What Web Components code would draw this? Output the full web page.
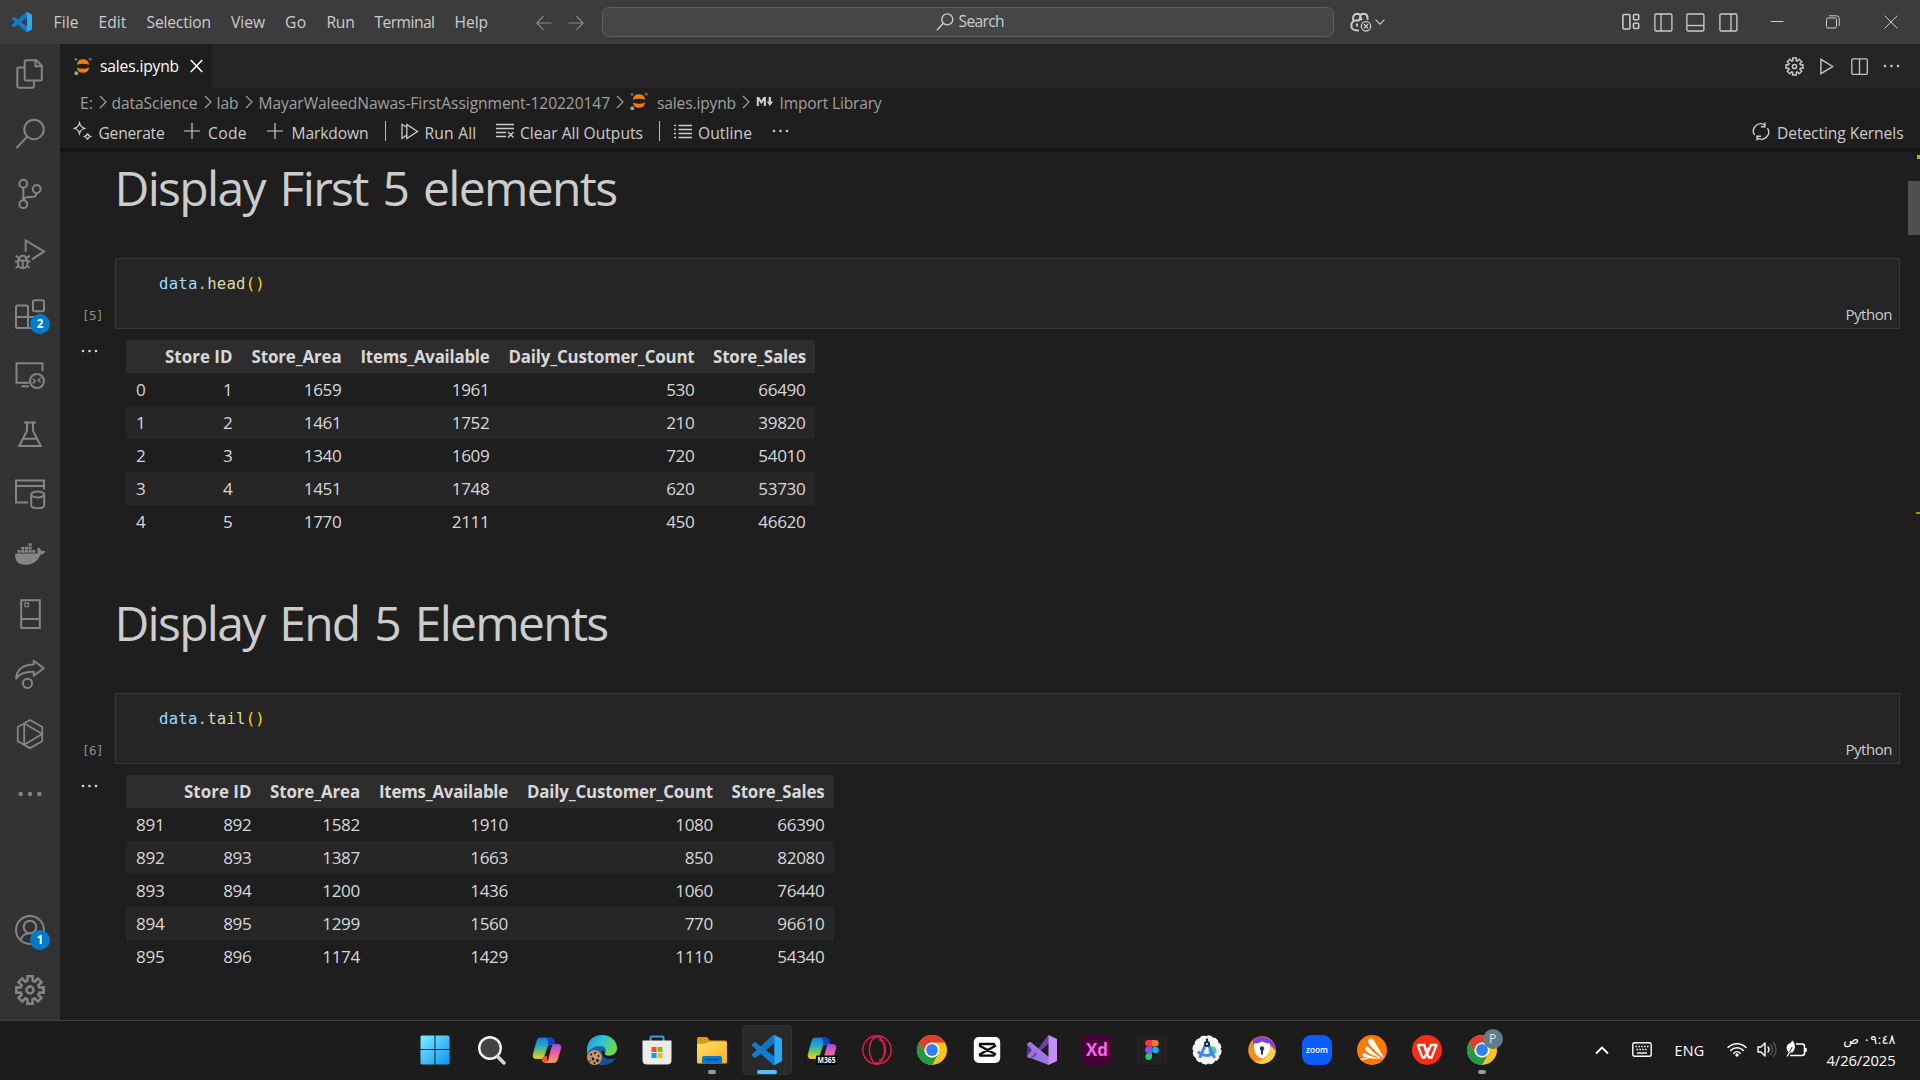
<!DOCTYPE html>
<html lang="en">
<head>
<meta charset="utf-8">
<title>sales.ipynb - Visual Studio Code</title>
<style>
html,body{margin:0;height:100%;background:#1e1e1e;overflow:hidden}
body{font-family:"Open Sans","Noto Sans",sans-serif;font-size:15.6px;color:#ccc}
</style>
</head>
<body>
<desk-top></desk-top>
<script>
const gear = (c, ro, ri, tw, bw) => {
  let d = '';
  for (let i = 0; i < 8; i++) {
    const a = i * Math.PI / 4;
    const p = (r, o) => { const b = a + o; return (c + r * Math.sin(b)).toFixed(2) + ' ' + (c - r * Math.cos(b)).toFixed(2); };
    d += (i ? 'L' : 'M') + p(ri, -bw) + 'L' + p(ro, -tw) + 'L' + p(ro, tw) + 'L' + p(ri, bw);
  }
  return d + 'Z';
};
const S = (w, body) => `<g fill="none" stroke="currentColor" stroke-width="${w}">${body}</g>`;
const VS = 'M23.15 2.587L18.21.21a1.494 1.494 0 0 0-1.705.29l-9.46 8.63-4.12-3.128a.999.999 0 0 0-1.276.057L.327 7.261A1 1 0 0 0 .326 8.74L3.899 12 .326 15.26a1 1 0 0 0 .001 1.479L1.65 17.94a.999.999 0 0 0 1.276.057l4.12-3.128 9.46 8.63a1.492 1.492 0 0 0 1.704.29l4.942-2.377A1.5 1.5 0 0 0 24 20.06V3.939a1.5 1.5 0 0 0-.85-1.352zm-5.146 14.861L10.826 12l7.178-5.448v10.896z';
const vscode = `<path d="${VS}" fill="#0a77c6"/><path d="M7 9.2 16.5.5l1.5 6-7.2 5.5-6.9 0z" fill="#0a6bb5"/><path d="${VS}" fill="#1f8ad8" fill-opacity=".35"/><path d="M18.2.2 23.15 2.6A1.5 1.5 0 0 1 24 3.94v16.12a1.5 1.5 0 0 1-.85 1.35L18.2 23.8a1.5 1.5 0 0 1-1.7-.3c.6.5 1.5.1 1.5-.7V1.2c0-.8-.9-1.2-1.5-.7a1.5 1.5 0 0 1 1.7-.3z" fill="#2aa9f4"/>`;
const chrome = `<circle cx="15" cy="15" r="15" fill="#fcc31a"/><path d="M2 7.5A15 15 0 0 1 28 7.5H15a7.5 7.5 0 0 0-6.6 11z" fill="#e33b2e"/><path d="M2 7.5 8.5 18.7A7.5 7.5 0 0 0 21.5 18.7L15 30A15 15 0 0 1 2 7.5z" fill="#229a48"/><circle cx="15" cy="15" r="7.5" fill="#fff"/><circle cx="15" cy="15" r="5.9" fill="#3380ef"/>`;
const copilotDefs = `<defs><linearGradient id="a" x1="0" y1="0" x2="0" y2="1"><stop offset="0" stop-color="#1c7be8"/><stop offset=".4" stop-color="#22b0c8"/><stop offset=".7" stop-color="#7ec850"/><stop offset="1" stop-color="#f5d020"/></linearGradient><linearGradient id="b" x1="0" y1="0" x2="0" y2="1"><stop offset="0" stop-color="#a24be8"/><stop offset=".5" stop-color="#ee62a0"/><stop offset="1" stop-color="#ff9a58"/></linearGradient></defs>`;
const copilot = copilotDefs + `<path d="M8 3h10c2 0 3 1 3.500 3l1 3.500h-4c-2 0-3 1-3.600 3L12 21c-.6 2-1.700 2.500-3.500 2.500H4C1.500 23.500.6 22 1.300 19L5 6c.6-2 1.400-3 3-3z" fill="url(#a)" stroke="url(#a)" stroke-width=".8"/><path d="M16 2.600h3c2 0 3 1 3.500 3l1 4h-4c-2 0-3 .6-3.600 2.500C16 8 17 5 14 2.600z" fill="#1440c0"/><path d="M9 23.800c2-.2 2.600-1 3-2.500l2.800 0 1 6.500H13c-2 0-2.700-1-3-2z" fill="#f0523c"/><path d="M22 9.500h4c2.500 0 3.300 1.500 2.700 4L25.500 24c-.8 2.500-1.600 3.500-3.500 3.500h-8.500c1.800-.2 2.600-1.200 3.200-3l3.100-12c.5-1.800 1-2.700 2.200-3z" fill="url(#b)" stroke="url(#b)" stroke-width=".8"/>`;

/* name: [viewBox width, viewBox height, markup] */
const ICONS = {
  vscode: [24, 24, vscode],
  left: [16, 16, S(1.1, '<path d="M15.500 8H1M7.500 1.200.8 8l6.700 6.800"/>')],
  right: [16, 16, S(1.1, '<path d="M.5 8H15M8.500 1.200 15.200 8l-6.700 6.800"/>')],
  lens: [18, 18, S(1.3, '<circle cx="11.300" cy="6.400" r="5.500"/><path d="M7.300 10.300.9 17.300"/>')],
  ghcp: [22, 20, S(2, '<path d="M9 18.500c-4 0-7-1.500-7.500-3v-3.500c.2-1.400 1-2 1.800-2.500C2.600 5 3.300 2 7 1.800c2.300 0 3.200 1 3.300 2.200.2-1.500 1.500-2.200 3.500-2.200 3 .2 4 2 3.700 6M4 8.500h4.500c1.300-.6 1.800-2 1.800-4.500.2 2.200.5 3.500 1.800 4"/>') + '<path d="M6 11.500h2v3H6z" fill="currentColor"/><circle cx="16" cy="14.300" r="5.600" fill="#3c3c3c"/>' + S(1.3, '<circle cx="16" cy="14.300" r="4.700"/><path d="m14 12.300 4 4m0-4-4 4"/>')],
  down: [10, 6, S(1.2, '<path d="m.6.700 4.400 4.400L9.400.7"/>')],
  layout: [18, 18, S(1.5, '<rect x=".9" y="1.500" width="7" height="14.500" rx="1"/><rect x="11.500" y="1.500" width="5.200" height="5.200" rx="1"/><rect x="11.500" y="10.300" width="5.200" height="5.200" rx="1"/>')],
  pleft: [19, 19, S(1.3, '<rect x=".9" y="1" width="17" height="17" rx="1.200"/><path d="M7 1v17"/>')],
  pbottom: [19, 19, S(1.3, '<rect x=".9" y="1" width="17" height="17" rx="1.200"/><path d="M1 12.500h17"/>')],
  pright: [19, 19, S(1.3, '<rect x=".9" y="1" width="17" height="17" rx="1.200"/><path d="M12 1v17"/>')],
  min: [14, 14, S(1, '<path d="M.5 6.500h13"/>')],
  restore: [14, 14, S(1, '<rect x=".5" y="3" width="10" height="10" rx="1.500"/><path d="M3 .8h7.500a2.700 2.700 0 0 1 2.700 2.700V11"/>')],
  close: [14, 14, S(1, '<path d="m.7.700 12.600 12.600m0-12.600L.7 13.300"/>')],
  tabx: [13, 14, S(1.5, '<path d="m.8 1 11.400 12m0-12L.8 13"/>')],
  jup: [18, 19, '<path d="M2.800 7.700A6.300 6.500 0 0 1 15.200 7.700Q9 5.700 2.800 7.700zM2.800 10.500A6.300 6.500 0 0 0 15.200 10.500Q9 13 2.800 10.500z" fill="#f57c00"/><circle cx="16.200" cy="2.200" r="1.600" fill="#616161"/><circle cx="2" cy="2.400" r="1.400" fill="#757575"/><circle cx="2.300" cy="16.300" r="2" fill="#9e9e9e"/>'],
  gearS: [19, 19, S(1.5, `<path d="${gear(9.5, 8.6, 6.1, .21, .3)}"/><circle cx="9.500" cy="9.500" r="2.100"/>`)],
  play: [14, 17, S(1.4, '<path d="M.9 1.300v14.400L12.700 8.500z"/>')],
  split: [17, 17, S(1.3, '<rect x=".8" y=".8" width="15.500" height="15.500" rx="1.200"/><path d="M8.500 1v15"/>')],
  dots: [17, 4, '<g fill="currentColor"><circle cx="2" cy="2" r="1.300"/><circle cx="8.500" cy="2" r="1.300"/><circle cx="15" cy="2" r="1.300"/></g>'],
  chev: [8, 14, S(1.2, '<path d="m1 1 6 6-6 6"/>')],
  spark: [19, 18, S(1.3, '<path d="M6.500 1c.8 3 1.500 4 5 5.300-3.500 1.200-4.200 2.200-5 5.200-.8-3-1.500-4-5-5.200C5 5 5.700 4 6.500 1zM14.500 11.500c.4 1.700 1 2.300 3 3-2 .7-2.600 1.300-3 3-.4-1.700-1-2.300-3-3 2-.7 2.600-1.300 3-3z"/>')],
  plus: [16, 16, S(1.2, '<path d="M8 0v16M0 8h16"/>')],
  runall: [18, 17, S(1.3, '<path d="M5.800 12 1 15.500v-14L5.800 4.300M5.800 1.500v14L16.500 8.500z"/>')],
  clear: [19, 16, S(1.4, '<path d="M0 1.500h18M0 5.500h18M0 9.500h10M0 13.500h10M12 9l5.500 5.500M17.500 9 12 14.500"/>')],
  outline: [18, 15, S(1.4, '<path d="M4.500 1.500H18M4.500 5.500H18M4.500 9.500H18M4.500 13.500H18M0 1.500h2M0 5.500h2M0 9.500h2M0 13.500h2"/>')],
  sync: [18, 19, S(1.4, '<path d="M2.500 13A7.300 7.300 0 0 1 12.500 2.900M15.500 6A7.300 7.300 0 0 1 5.500 16.100M13 .5v4.200H9M5 18.500v-4.200h4"/>')],
  md: [18, 12, '<path d="M0 11V1h2.600L5 5l2.400-4H10v10H7.700V5L5 9 2.300 5v6zM13 1h2.600v5H18l-3.700 5L10.800 6H13z" fill="currentColor"/>'],
  files: [30, 30, S(2, '<path d="M11.200 1.300h10.200l5.400 5.400v13.200a1.500 1.500 0 0 1-1.500 1.500H11.200a1.500 1.500 0 0 1-1.500-1.500V2.800a1.500 1.500 0 0 1 1.500-1.500zM20.500 1.300v6h6.300M9.500 8.400H3.800a1.500 1.500 0 0 0-1.500 1.500v17.400a1.500 1.500 0 0 0 1.500 1.500h13.600a1.500 1.500 0 0 0 1.500-1.500v-5.500"/>')],
  search: [30, 30, S(2, '<circle cx="19" cy="10.500" r="9.700"/><path d="M12.200 17.600 1.500 29"/>')],
  git: [30, 30, S(2, '<circle cx="8.300" cy="4.700" r="3.900"/><circle cx="21.700" cy="10" r="3.900"/><circle cx="8.300" cy="25.200" r="3.900"/><path d="M8.300 8.600v12.700M21.700 14c-.2 2.800-1.700 4-4.700 4h-3c-3 0-5 1-5.600 3.200"/>')],
  debug: [30, 30, S(2, '<path d="M10.700 12.800V1.500L29 12.500 17 20.300"/><path d="M3 21.500h9.500v2.700a4.750 5 0 0 1-9.500 0zM4 21.500c0-6.500 7.500-6.500 7.500 0M0 22.500h3m9.500 0h3M.7 16.500l3 2.500m8 0 3-2.500M.7 29l3-2.500m8 0 3 2.500M7.700 22v7"/>')],
  ext: [30, 30, S(2, '<rect x="18" y="1.300" width="11" height="11" rx="1.500"/><path d="M13 18V8a1.500 1.500 0 0 0-1.500-1.500H2.500A1.500 1.500 0 0 0 1 8v19.500A1.500 1.500 0 0 0 2.500 29h21a1.500 1.500 0 0 0 1.500-1.500V19.500a1.500 1.500 0 0 0-1.500-1.500H1M13 18v11"/>')],
  remote: [30, 30, S(2, '<path d="M27.500 12V4.200h-26v19.600H14M6.500 27.300H14"/><circle cx="22" cy="22" r="7"/>') + S(1.500, '<path d="m17.800 19.800 2.500 2.300-2.500 2.500M25.800 18.800l-2.500 2.400 2.500 2.300"/>')],
  flask: [30, 30, S(2, '<path d="M9 3.500h12M12 3.500v8.200L4.200 27h21.600L18 11.700V3.500M8 19.800h14"/>')],
  dbase: [30, 30, S(2, '<path d="M13 23.500H1V1.500h28v9M1 7h28"/><ellipse cx="22.700" cy="15.500" rx="6.500" ry="3"/><path d="M16.200 15.500v10.700c0 3.900 13 3.900 13 0V15.500"/>')],
  docker: [24, 24, '<path fill="currentColor" d="M13.983 11.078h2.119a.186.186 0 00.186-.185V9.006a.186.186 0 00-.186-.186h-2.119a.185.185 0 00-.185.185v1.888c0 .102.083.185.185.185m-2.954-5.43h2.118a.186.186 0 00.186-.186V3.574a.186.186 0 00-.186-.185h-2.118a.185.185 0 00-.185.185v1.888c0 .102.082.185.185.185m0 2.716h2.118a.187.187 0 00.186-.186V6.29a.186.186 0 00-.186-.185h-2.118a.185.185 0 00-.185.185v1.887c0 .102.082.185.185.186m-2.93 0h2.12a.186.186 0 00.184-.186V6.29a.185.185 0 00-.185-.185H8.1a.185.185 0 00-.185.185v1.887c0 .102.083.185.185.186m-2.964 0h2.119a.186.186 0 00.185-.186V6.29a.185.185 0 00-.185-.185H5.136a.186.186 0 00-.186.185v1.887c0 .102.084.185.186.186m5.893 2.715h2.118a.186.186 0 00.186-.185V9.006a.186.186 0 00-.186-.186h-2.118a.185.185 0 00-.185.185v1.888c0 .102.082.185.185.185m-2.93 0h2.12a.185.185 0 00.184-.185V9.006a.185.185 0 00-.184-.186h-2.12a.185.185 0 00-.184.185v1.888c0 .102.083.185.185.185m-2.964 0h2.119a.185.185 0 00.185-.185V9.006a.185.185 0 00-.184-.186h-2.12a.186.186 0 00-.186.186v1.887c0 .102.084.185.186.185m-2.92 0h2.12a.185.185 0 00.184-.185V9.006a.185.185 0 00-.184-.186h-2.12a.185.185 0 00-.184.185v1.888c0 .102.082.185.185.185M23.763 9.890c-.065-.051-.672-.51-1.954-.51-.338.001-.676.03-1.01.087-.248-1.700-1.653-2.530-1.716-2.566l-.344-.199-.226.327c-.284.438-.49.922-.612 1.430-.23.970-.09 1.882.403 2.661-.595.332-1.550.413-1.744.420H.751a.751.751 0 00-.75.748 11.376 11.376 0 00.692 4.062c.545 1.428 1.355 2.480 2.410 3.124 1.180.723 3.100 1.137 5.275 1.137.983.003 1.963-.086 2.930-.266a12.248 12.248 0 003.823-1.389c.98-.567 1.860-1.288 2.610-2.136 1.252-1.418 1.998-2.997 2.553-4.400h.221c1.372 0 2.215-.549 2.680-1.009.309-.293.550-.65.707-1.046l.098-.288Z"/>'],
  server: [30, 30, S(2, '<rect x="6.200" y="1.200" width="18.600" height="27.800"/><path d="M6 20h19"/>') + S(1.200, '<rect x="9.900" y="4" width="3.600" height="3.600"/>')],
  share: [30, 30, S(2, '<path d="M18.700 1.800 28.800 9.200 18.700 16.800V12.800C11 12.500 5 14.500 1.200 19.500 1.500 11 8 5.500 18.700 5.400z" stroke-linejoin="round"/><circle cx="12.500" cy="24.300" r="4.600"/>')],
  hex: [30, 30, S(1.800, '<path d="M15 1 27.200 8v14.200L15 29.100 2.800 22.200V8zM9.200 4.300v21.600M9.200 4.300 27.200 15 9.200 25.800"/>')],
  more: [30, 30, '<g fill="currentColor"><circle cx="5.700" cy="15" r="2.200"/><circle cx="15" cy="15" r="2.200"/><circle cx="24.300" cy="15" r="2.200"/></g>'],
  user: [30, 30, S(2, '<circle cx="15" cy="15" r="14"/><circle cx="15" cy="12" r="6.300"/><path d="M5.700 25.300c1-4 4-7 9.300-7s8.300 3 9.300 7"/>')],
  gear: [30, 30, S(2.500, `<path d="${gear(15, 13.9, 9.6, .19, .27)}"/><circle cx="15" cy="15" r="3.500"/>`)],
  win: [30, 30, '<defs><linearGradient id="w" gradientUnits="userSpaceOnUse" x1="0" y1="0" x2="30" y2="30"><stop offset="0" stop-color="#7ef0fb"/><stop offset="1" stop-color="#0c93f5"/></linearGradient></defs><path fill="url(#w)" d="M2 .5h12.500V14H.5V2Q.5.5 2 .5zM15.500.5H28q1.500 0 1.500 1.500v12h-14zM.5 15h14v14.500H2Q.5 29.500.5 28zM15.500 15h14v13q0 1.500-1.500 1.500H15.500z"/>'],
  tsearch: [30, 30, '<circle cx="13" cy="13" r="10.800" fill="#444" stroke="#f2f2f2" stroke-width="2.400"/><path d="m20.500 21.500 6.500 6.500" stroke="#d5dae0" stroke-width="3.500" stroke-linecap="round"/>'],
  copilot: [30, 30, copilot],
  edge: [30, 30, '<defs><linearGradient id="e" x1="0" y1="0" x2="1" y2=".5"><stop offset="0" stop-color="#1c8fd8"/><stop offset=".5" stop-color="#2fc0d8"/><stop offset="1" stop-color="#6bdc4a"/></linearGradient></defs><circle cx="15" cy="15" r="15" fill="#1763b4"/><path d="M18 17c-1 4 5 6 12 1-1 3-2 4-2.500 5.500C21 26 13 23 15 15zM22 20l8-4 1 5-4 3z" fill="#1c1c1c"/><path d="M0 13C1 5 7 0 15 0c9 0 15 6 15 13 0 5-4 8-9 7.500-4-.3-3.500-2-2.500-3.500 1-2 0-5.500-4.500-6C7 10.500 1 15 0 20z" fill="url(#e)"/><path d="M14.500 15c-1 8 6 11.500 14 8l-.5 1.200A15 15 0 0 1 17 29.900C10 28 7.500 20 14.500 15z" fill="#174f92"/><circle cx="7.500" cy="22.500" r="7.500" fill="#c29069"/><g fill="#20140e"><circle cx="4" cy="19.500" r="1"/><circle cx="8" cy="18" r="1"/><circle cx="11.500" cy="21" r="1"/><circle cx="6" cy="24" r="1.400"/><circle cx="10.500" cy="25.500" r="1.500"/><circle cx="7.500" cy="28" r="1"/><circle cx="3" cy="26" r=".8"/></g><circle cx="8" cy="22" r=".8" fill="#f3c85b"/>'],
  store: [30, 30, '<path d="M8.500 7V2.500q0-1 1-1h11q1 0 1 1V7" fill="none" stroke="#29a8e0" stroke-width="2"/><path d="M.5 5.500h29V25q0 4.500-4.500 4.500H5Q.5 29.500.5 25z" fill="#ececec"/><path fill="#f05022" d="M9.500 12h5v5h-5z"/><path fill="#7eba00" d="M15.500 12h5v5h-5z"/><path fill="#00a3f4" d="M9.500 18h5v5h-5z"/><path fill="#ffba08" d="M15.500 18h5v5h-5z"/>'],
  folder: [30, 30, '<defs><linearGradient id="f" x1="0" y1="0" x2="1" y2="1"><stop offset="0" stop-color="#ffdc6e"/><stop offset="1" stop-color="#fab515"/></linearGradient></defs><path d="M0 3.500Q0 2 1.500 2H10l3 3.500h15q2 0 2 2V15H0z" fill="#d99a10"/><path d="M0 9q6 0 10-1.200 2-.8 4-1.300H28q2 0 2 1.500v19q0 1.500-1.500 1.500h-27Q0 28.500 0 27z" fill="url(#f)"/><path d="M5 28.500V23q0-2 2-2h16q2 0 2 2v5.500z" fill="#1273c8"/><path d="M8.500 24.500h13" stroke="#0a4a94" stroke-width="1.300"/>'],
  m365: [30, 30, copilot + '<rect x="9" y="20.500" width="21" height="9.500" rx="1" fill="#050505"/><text x="19.500" y="28.300" font-size="8" font-weight="700" text-anchor="middle" textLength="18" lengthAdjust="spacingAndGlyphs" fill="#fff" font-family="Open Sans,sans-serif">M365</text>'],
  opera: [30, 30, '<g fill="none" stroke="#ee1c46" stroke-width="1.400"><circle cx="15" cy="15" r="14.200"/><ellipse cx="15" cy="15" rx="7.600" ry="13.200"/><path d="M17 4.700c3 0 6.500 4.300 6.500 10.300S20 25.300 17 25.300"/></g>'],
  chrome: [30, 30, chrome],
  capcut: [30, 30, '<rect x="1.800" y="2" width="26.400" height="26" rx="5" fill="#fff"/><g fill="none" stroke="#0a0a0a" stroke-width="2.300" stroke-linejoin="round"><path d="M24 10.500 8 19.300v1.300h14v-1.300M24 19.500 8 11V9h14v1.300"/></g>'],
  vstudio: [30, 30, '<path d="M0 9 3.500 7 12 14l9.500-14L20 10 5 22.500 1.500 23 0 21z" fill="#7b53b4"/><path d="M0 9 3.500 7 21.500 23V30L3.500 23H2L0 21.500z" fill="#9a72dc"/><path d="m0 21 0-12 4.800 6z" fill="#52318f"/><path d="M4 23 21.500 0 22 8 7 22z" fill="#6a42a8"/><path d="M3 7 22 22v8L12 21 0 9z" fill="#a076e0"/><path d="M21.500 0 30 4v22l-8.500 4z" fill="#c38ef5"/>'],
  xd: [30, 30, '<rect width="30" height="30" rx="5.500" fill="#470137"/><text x="15" y="21.300" font-size="17.500" font-weight="700" text-anchor="middle" textLength="22" lengthAdjust="spacingAndGlyphs" fill="#ff61f6" font-family="Open Sans,sans-serif">Xd</text>'],
  figma: [30, 30, '<rect width="30" height="30" rx="3" fill="#202020"/><path d="M15 5h-3.500a3.300 3.300 0 0 0 0 6.600H15z" fill="#ff3737"/><path d="M15 5h3.300a3.300 3.300 0 0 1 0 6.600H15z" fill="#ff7237"/><path d="M15 11.600h-3.500a3.300 3.300 0 0 0 0 6.700H15z" fill="#874fff"/><circle cx="18.400" cy="15" r="3.300" fill="#00b6ff"/><path d="M15 18.300h-3.500a3.300 3.300 0 1 0 3.500 3.300z" fill="#24cb71"/>'],
  astudio: [30, 30, '<circle cx="15" cy="15" r="13.900" fill="#f4f6f8" stroke="#f4f6f8" stroke-width="1.500" stroke-dasharray="4.500 2.780"/><circle cx="20.500" cy="15.500" r="4" fill="#3ddc84"/><g fill="none" stroke="#4285f4" stroke-width="3"><path d="M13.800 9 7.500 23M16.200 9l6.300 14M6 16.500c4 5 12 5 15.500 1"/></g><circle cx="15" cy="9" r="2" fill="#fff" stroke="#073042" stroke-width="2"/><path d="M15 3.500V7" stroke="#073042" stroke-width="2"/>'],
  secure: [30, 30, '<circle cx="15" cy="15" r="13.800" fill="#ff8a25"/><path d="M6 5a13.800 13.800 0 0 1 22.600 11C24 7 16 5 6 10z" fill="#7b3ff0"/><path d="M28.600 16A13.800 13.800 0 0 1 6.500 26c8 1 16-3 17-15z" fill="#f5d33c"/><path d="M15 6.500c3 1.700 5 2 8 2 .5 8-1.500 12.500-8 15-6.500-2.500-8.500-7-8-15 3 0 5-.3 8-2z" fill="#fff"/><circle cx="15" cy="13.500" r="2.200" fill="#2c3350"/><path d="M14 14h2v5.500h-2z" fill="#2c3350"/>'],
  zoom: [30, 30, '<rect width="30" height="30" rx="9" fill="#0b5cff"/><text x="15" y="17.500" font-size="8.500" font-weight="600" text-anchor="middle" textLength="22" lengthAdjust="spacingAndGlyphs" fill="#fff" font-family="Open Sans,sans-serif">zoom</text>'],
  avast: [30, 30, '<circle cx="15" cy="15" r="15" fill="#ff7800"/><path d="M11.500 5c1-2 4-2 5 0l10.800 18.200c-6-4-11.500-9.200-15.300-14.200-1-1.500-1-2.800-.5-4zM8.300 12.500c.8-1.500 2.500-1.200 3.500 0 3.500 4.300 8 7.700 14 11C18 21.500 12 19 9 16c-1-1-1.300-2.300-.7-3.500zM5.500 19c.7-1 1.700-1 2.700-.6 5 2.600 10 4 16 5.300-7 .3-12-.2-16.500-1.700-2-.6-2.800-2-2.200-3z" fill="#fff"/><path d="M3.500 24c3-1.300 6-1 9-.8-3 .7-6 1.500-8.500 2.300z" fill="#fff"/>'],
  wps: [30, 30, '<circle cx="15" cy="15" r="15" fill="#fb2d16"/><path d="M5.500 10h6.700l3 8.500L19 10h5.500l-5 12.500h-2.800L13 13.500M5.500 10l5 12.500h2.300L16.500 13" fill="none" stroke="#fff" stroke-width="2.300" stroke-linejoin="round"/>'],
  tup: [14, 9, '<path d="m1.500 7 5.500-5.500L12.500 7" fill="none" stroke="#fff" stroke-width="1.800" stroke-linecap="round"/>'],
  kbd: [20, 15, '<rect x=".8" y=".8" width="18.400" height="13.400" rx="1.800" fill="none" stroke="#fff" stroke-width="1.400"/><path d="M3.500 4.500h13M4.500 7.500h11" stroke="#fff" stroke-width="1.500" stroke-dasharray="1.500 1.370"/><path d="M5 11h10" stroke="#fff" stroke-width="1.400"/>'],
  wifi: [20, 15, '<g fill="none" stroke="#fff" stroke-width="1.500" stroke-linecap="round"><path d="M1 5.500a12.700 12.700 0 0 1 18 0M3.800 8.400a8.700 8.700 0 0 1 12.400 0M6.700 11.200a4.700 4.700 0 0 1 6.600 0"/></g><circle cx="10" cy="13" r="1.700" fill="#fff"/>'],
  vol: [20, 17, '<g fill="none" stroke="#fff" stroke-width="1.400" stroke-linecap="round" stroke-linejoin="round"><path d="M1 6h3l4-4v13l-4-4H1zM11 6a4 4 0 0 1 0 5"/><path d="M13.500 3.500a8 8 0 0 1 0 10M16.500 1.500a11 11 0 0 1 0 14" stroke="#555"/></g>'],
  batt: [21, 18, '<path d="M10 4h6q2.500 0 2.500 2.500V13q0 2.500-2.500 2.500H4" fill="none" stroke="#fff" stroke-width="1.500"/><path d="M19 8h1q.8 0 .8 1v2q0 1-.8 1h-1z" fill="#fff"/><path d="M6.500.5c3 3.500 3.500 8 0 12H3.500C-.5 11-.5 4 4.500 3z" fill="#fff"/><path d="M1 16.500 5.500 9" stroke="#fff" stroke-width="1.400"/><path d="M3.500 12 6.200 7" stroke="#1c1c1c" stroke-width="1"/>'],
};

/* Base class: clones its template into an open shadow root. */
class Base extends HTMLElement {
  constructor() { super(); this.attachShadow({ mode: 'open' }); }
  connectedCallback() {
    const t = document.createElement('template');
    t.innerHTML = `<style>*{box-sizing:border-box}${this.css()}</style>${this.html()}`;
    this.shadowRoot.replaceChildren(t.content.cloneNode(true));
    this.ready();
  }
  css() { return ''; } html() { return ''; } ready() {}
  a(n, d) { return this.hasAttribute(n) ? this.getAttribute(n) : d; }
}

/* Icon: name, w, h, ml (left margin), dy (vertical nudge through margin-top). */
customElements.define('ui-icon', class extends Base {
  css() { return `:host{display:block;flex:none;width:${this.a('w', 30)}px;height:${this.a('h', this.a('w', 30))}px;margin-left:${this.a('ml', 0)}px;margin-top:${this.a('dy', 0)}px}svg{display:block;width:100%;height:100%;overflow:visible}`; }
  html() { const [w, h, b] = ICONS[this.a('name')]; return `<svg viewBox="0 0 ${w} ${h}">${b}</svg>`; }
});

/* Label whose tracking is tuned so that it spans exactly w pixels. */
customElements.define('ui-label', class extends Base {
  css() { return `:host{display:block;flex:none;white-space:nowrap;width:${this.a('w')}px;margin-left:${this.a('ml', 0)}px}span{display:inline-block}`; }
  html() { return `<span>${this.a('t')}</span>`; }
  ready() {
    const s = this.shadowRoot.querySelector('span');
    const n = this.a('t').length, w = parseFloat(this.a('w'));
    s.style.letterSpacing = ((w - s.getBoundingClientRect().width) / n).toFixed(3) + 'px';
  }
});

customElements.define('title-bar', class extends Base {
  css() { return `:host{display:flex;align-items:center;height:44px;background:#3c3c3c;color:#ccc;flex:none;padding-left:12px}
    nav{display:flex;gap:20px;margin-left:21.500px}
    .s{display:flex;align-items:center;justify-content:flex-start;width:732px;height:30px;margin-left:17.500px;border:1px solid #606060;border-radius:7px;background:#464646;padding-left:333px}
    .n{display:flex;color:#8a8a8a}`; }
  html() {
    const m = [['File', 25], ['Edit', 28], ['Selection', 64.5], ['View', 34], ['Go', 21.5], ['Run', 28], ['Terminal', 60], ['Help', 33.5]];
    return `<ui-icon name="vscode" w="20"></ui-icon><nav>${m.map(([t, w]) => `<ui-label t="${t}" w="${w}"></ui-label>`).join('')}</nav>
    <div class="n"><ui-icon name="left" w="16" ml="47.500" dy="1"></ui-icon><ui-icon name="right" w="16" ml="16.500" dy="1"></ui-icon></div>
    <div class="s"><ui-icon name="lens" w="18" dy="-1"></ui-icon><ui-label t="Search" w="45.500" ml="5" style="margin-top:-2px"></ui-label></div>
    <ui-icon name="ghcp" w="22" h="20" ml="16"></ui-icon><ui-icon name="down" w="10" h="6" ml="3.500" dy="-1"></ui-icon>
    <ui-icon name="layout" w="18" ml="237"></ui-icon><ui-icon name="pleft" w="19" ml="13.500"></ui-icon><ui-icon name="pbottom" w="19" ml="13.500"></ui-icon><ui-icon name="pright" w="19" ml="13.500"></ui-icon>
    <ui-icon name="min" w="14" ml="32.500" dy="-1"></ui-icon><ui-icon name="restore" w="14" ml="42" dy="-1"></ui-icon><ui-icon name="close" w="14" ml="44" dy="-1"></ui-icon>`;
  }
});

customElements.define('activity-item', class extends Base {
  css() { return `:host{display:flex;position:relative;align-items:center;justify-content:center;width:60px;height:60px;color:#858585;flex:none}
    b{position:absolute;left:30px;top:30px;width:20px;height:20px;border-radius:50%;background:#007acc;color:#fff;font:700 11.500px/20px "Open Sans",sans-serif;text-align:center}`; }
  html() { return `<ui-icon name="${this.a('icon')}" w="30"></ui-icon>${this.a('badge') ? `<b>${this.a('badge')}</b>` : ''}`; }
});

customElements.define('activity-bar', class extends Base {
  css() { return `:host{display:flex;flex-direction:column;width:60px;background:#333;flex:none}i{flex:1}`; }
  html() {
    const l = ['files', 'search', 'git', 'debug', 'ext', 'remote', 'flask', 'dbase', 'docker', 'server', 'share', 'hex', 'more'];
    return l.map(n => `<activity-item icon="${n}" ${n === 'ext' ? 'badge="2"' : ''}></activity-item>`).join('') + `<i></i><activity-item icon="user" badge="1"></activity-item><activity-item icon="gear"></activity-item>`;
  }
});

customElements.define('tab-strip', class extends Base {
  css() { return `:host{display:flex;height:44px;background:#252526;align-items:center;flex:none;color:#c5c5c5}
    .t{display:flex;align-items:center;width:153px;height:44px;background:#1e1e1e;padding-left:14px;color:#fff}
    .a{display:flex;align-items:center;margin-left:auto;margin-right:20.500px}`; }
  html() { return `<div class="t"><ui-icon name="jup" w="18" h="19"></ui-icon><ui-label t="sales.ipynb" w="79" ml="8"></ui-label><ui-icon name="tabx" w="13" h="14" ml="10.500"></ui-icon></div>
    <div class="a"><ui-icon name="gearS" w="19"></ui-icon><ui-icon name="play" w="14" h="17" ml="16" dy="1"></ui-icon><ui-icon name="split" w="17" ml="17"></ui-icon><ui-icon name="dots" w="17" h="4" ml="15"></ui-icon></div>`; }
});

customElements.define('bread-crumbs', class extends Base {
  css() { return `:host{display:flex;height:28px;align-items:center;flex:none;color:#a0a0a0;padding:1px 0 0 20px}`; }
  html() {
    const c = (ml) => `<ui-icon name="chev" w="8" h="14" ml="${ml}" dy="-2"></ui-icon>`;
    return `<ui-label t="E:" w="13"></ui-label>${c(6)}<ui-label t="dataScience" w="86" ml="4.500"></ui-label>${c(6.500)}<ui-label t="lab" w="22" ml="4.500"></ui-label>${c(6)}<ui-label t="MayarWaleedNawas-FirstAssignment-120220147" w="351.500" ml="6"></ui-label>${c(6)}<ui-icon name="jup" w="18" h="19" ml="6" dy="-3"></ui-icon><ui-label t="sales.ipynb" w="79" ml="9"></ui-label>${c(5.5)}<ui-icon name="md" w="18" h="11" ml="6" dy="-3" style="color:#ccc"></ui-icon><ui-label t="Import Library" w="102" ml="6"></ui-label>`;
  }
});

customElements.define('notebook-toolbar', class extends Base {
  css() { return `:host{display:flex;height:32px;align-items:center;flex:none;color:#ccc;padding:1px 16.500px 0 13px}
    i{width:1px;height:20px;background:#bbb}s{flex:1}`; }
  html() { return `<ui-icon name="spark" w="19" h="18" dy="-3"></ui-icon><ui-label t="Generate" w="66" ml="6.500"></ui-label>
    <ui-icon name="plus" w="16" ml="19" dy="-4"></ui-icon><ui-label t="Code" w="39" ml="8.500"></ui-label>
    <ui-icon name="plus" w="16" ml="19.500" dy="-4"></ui-icon><ui-label t="Markdown" w="77" ml="9"></ui-label>
    <i style="margin-left:16px;margin-top:-3px"></i><ui-icon name="runall" w="18" h="17" ml="15" dy="-2"></ui-icon><ui-label t="Run All" w="52" ml="6"></ui-label>
    <ui-icon name="clear" w="19" h="16" ml="19" dy="-3"></ui-icon><ui-label t="Clear All Outputs" w="123" ml="5.500"></ui-label>
    <i style="margin-left:16px;margin-top:-3px"></i><ui-icon name="outline" w="18" h="15" ml="14" dy="-3"></ui-icon><ui-label t="Outline" w="54" ml="6"></ui-label>
    <ui-icon name="dots" w="17" h="4" ml="19.500" dy="-3"></ui-icon><s></s>
    <ui-icon name="sync" w="18" h="19" dy="-3"></ui-icon><ui-label t="Detecting Kernels" w="126.500" ml="7"></ui-label>`; }
});

customElements.define('md-heading', class extends Base {
  css() { return `:host{display:block;height:60px;margin-left:54.500px;font-size:48px;line-height:60px;color:#ccc;word-spacing:4px}`; }
  html() { return `<ui-label t="${this.a('t')}" w="${this.a('w')}"></ui-label>`; }
});

customElements.define('code-cell', class extends Base {
  css() { return `:host{display:flex;height:71px;margin-top:40.500px;padding-right:20px}
    .n{width:55px;padding:49px 0 0 22px;font:12.500px/18px "DejaVu Sans Mono",monospace;color:#8c8c8c;letter-spacing:-.5px;flex:none}
    .c{flex:1;display:flex;justify-content:space-between;border:1px solid #37373d;background:#252526;padding:13px 7px 0 43px}
    pre{margin:0;font:15.600px/25px "DejaVu Sans Mono",monospace;letter-spacing:.24px;color:#bdbdbd}
    .v{color:#9cdcfe}.f{color:#dcdcaa}.p{color:#ffd700}
    ui-label{margin-top:31px;line-height:22px;font-size:15px}`; }
  html() { return `<div class="n">[${this.a('n')}]</div><div class="c"><pre><span class="v">data</span>.<span class="f">${this.a('fn')}</span><span class="p">()</span></pre><ui-label t="Python" w="46.500"></ui-label></div>`; }
});

const HEAD = [['Store ID', 67.5], ['Store_Area', 90], ['Items_Available', 129], ['Daily_Customer_Count', 186], ['Store_Sales', 93]];
customElements.define('data-frame', class extends Base {
  css() { return `:host{display:flex;margin-top:11px;padding-left:20.500px;align-items:flex-start;color:#d8d8d8}
    ui-icon{margin-right:28.500px}
    table{border-collapse:collapse;table-layout:fixed;width:${this.a('cols').split(' ').reduce((p, c) => p + +c, 0)}px}
    td,th{height:33px;padding:1px 9.500px 0 10px;text-align:right;font-size:17.100px;line-height:32px;letter-spacing:-.33px;white-space:nowrap}
    th{font-weight:700;font-size:16.900px;letter-spacing:0;padding-left:9px}td:first-child{text-align:left}
    thead tr{background:#2d2d2d}tbody tr:nth-child(even){background:#262626}`; }
  html() {
    const rows = this.a('rows').split('|').map(r => r.split(' '));
    return `<ui-icon name="dots" w="17" h="4" dy="9"></ui-icon><table><colgroup>${this.a('cols').split(' ').map(c => `<col style="width:${c}px">`).join('')}</colgroup>
      <thead><tr><th></th>${HEAD.map(([t, w]) => `<th><ui-label t="${t}" w="${w}" style="margin-left:auto"></ui-label></th>`).join('')}</tr></thead>
      <tbody>${rows.map(r => `<tr>${r.map(c => `<td>${c}</td>`).join('')}</tr>`).join('')}</tbody></table>`;
  }
});

customElements.define('scroll-ruler', class extends Base {
  css() { return `:host{display:flex;flex-direction:column;position:absolute;right:0;top:0;bottom:0;width:12px}
    i{display:block;flex:none}.m{width:3px;height:4px;background:#cca700;margin:5px 0 0 auto}.t{height:54px;background:#4f4f4f;margin-top:22px}.k{width:4px;height:2px;background:#b58900;margin:277px 0 0 auto}`; }
  html() { return `<i class="m"></i><i class="t"></i><i class="k"></i>`; }
});

customElements.define('note-book', class extends Base {
  css() { return `:host{display:block;position:relative;flex:1;min-height:0;background:#1e1e1e;border-top:2px solid #141414;box-shadow:inset 0 2px 2px -1px #111;padding-top:7.500px}`; }
  html() { return `<md-heading t="Display First 5 elements" w="502"></md-heading>
    <code-cell n="5" fn="head"></code-cell>
    <data-frame cols="29 87 109 148 205 111" rows="0 1 1659 1961 530 66490|1 2 1461 1752 210 39820|2 3 1340 1609 720 54010|3 4 1451 1748 620 53730|4 5 1770 2111 450 46620"></data-frame>
    <md-heading t="Display End 5 Elements" w="493" style="margin-top:54.500px"></md-heading>
    <code-cell n="6" fn="tail"></code-cell>
    <data-frame cols="48 87 108.500 148 205 111.500" rows="891 892 1582 1910 1080 66390|892 893 1387 1663 850 82080|893 894 1200 1436 1060 76440|894 895 1299 1560 770 96610|895 896 1174 1429 1110 54340"></data-frame>
    <scroll-ruler></scroll-ruler>`; }
});

customElements.define('editor-pane', class extends Base {
  css() { return `:host{display:flex;flex-direction:column;flex:1;min-width:0}`; }
  html() { return `<tab-strip></tab-strip><bread-crumbs></bread-crumbs><notebook-toolbar></notebook-toolbar><note-book></note-book>`; }
});

customElements.define('task-app', class extends Base {
  css() { return `:host{display:flex;position:relative;flex:none;width:55px;height:59px;align-items:center;justify-content:center}
    div{display:flex;align-items:center;justify-content:center;width:50px;height:50px;margin-top:-1px;border-radius:5px}
    .on{background:#292929;box-shadow:inset 0 0 0 1px #323232}
    i{position:absolute;bottom:6px;left:23.500px;width:8px;height:4px;border-radius:2px;background:#9a9a9a}
    .on~i{left:17.500px;width:20px;background:#4cc2ff}
    b{position:absolute;left:28px;top:8px;width:20px;height:20px;border-radius:50%;background:#607d8b;font:400 12px/20px "Open Sans",sans-serif;color:#dfe6ea;text-align:center}`; }
  html() { const s = this.a('state', ''); return `<div class="${s === 'on' ? 'on' : ''}"><ui-icon name="${this.a('icon')}" w="30"></ui-icon></div>${s ? '<i></i>' : ''}${this.a('badge') ? `<b>${this.a('badge')}</b>` : ''}`; }
});

customElements.define('task-bar', class extends Base {
  css() { return `:host{display:flex;height:60px;flex:none;background:#1c1c1c;border-top:1px solid #404040;color:#fff;padding:0 24.500px 0 407.500px;align-items:center}
    task-app:first-of-type{margin-right:2px}
    .tray{display:flex;align-items:center;margin-left:auto}
    .clk{display:flex;flex-direction:column;align-items:flex-end;margin-left:20px;line-height:20px;font-size:14.800px;margin-top:-1px}
    .clk div{height:20px;font-family:"DejaVu Sans","Noto Sans",sans-serif;font-size:13px;direction:rtl;line-height:19px}
    .eng{font-size:14.300px}`; }
  html() {
    const l = ['win', 'tsearch', 'copilot', 'edge', 'store', 'folder:run', 'vscode:on', 'm365', 'opera', 'chrome', 'capcut', 'vstudio', 'xd', 'figma', 'astudio', 'secure', 'zoom', 'avast', 'wps'];
    return l.map(x => { const [n, s] = x.split(':'); return `<task-app icon="${n}" ${s ? `state="${s}"` : ''}></task-app>`; }).join('') +
      `<task-app icon="chrome" state="run" badge="P"></task-app>
      <div class="tray"><ui-icon name="tup" w="14" h="9" dy="-1"></ui-icon><ui-icon name="kbd" w="20" h="15" ml="23" dy="-2"></ui-icon>
      <ui-label class="eng" t="ENG" w="30" ml="23"></ui-label><ui-icon name="wifi" w="20" h="15" ml="22" dy="-2"></ui-icon><ui-icon name="vol" w="20" h="17" ml="10" dy="-2"></ui-icon><ui-icon name="batt" w="21" h="18" ml="9" dy="-3"></ui-icon>
      <div class="clk"><div>٠٩:٤٨ ص</div><ui-label t="4/26/2025" w="69"></ui-label></div></div>`;
  }
});

customElements.define('desk-top', class extends Base {
  css() { return `:host{display:flex;flex-direction:column;width:1920px;height:1080px;overflow:hidden;background:#1e1e1e}main{display:flex;flex:1;min-height:0}`; }
  html() { return `<title-bar></title-bar><main><activity-bar></activity-bar><editor-pane></editor-pane></main><task-bar></task-bar>`; }
});
</script>
</body>
</html>
